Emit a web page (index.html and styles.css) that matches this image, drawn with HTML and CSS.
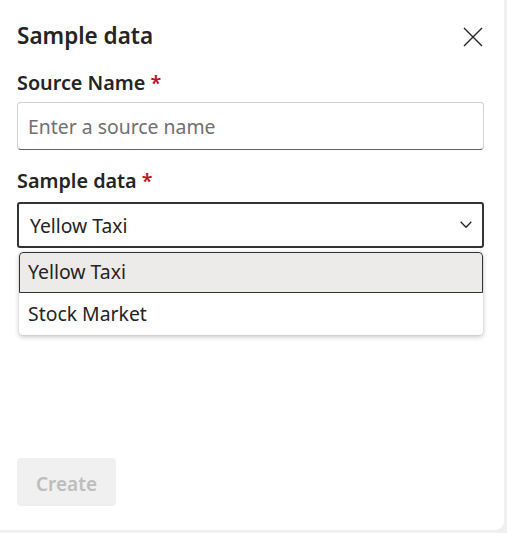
FILE: index.html
```html
<!DOCTYPE html>
<html>
<head>
<meta charset="utf-8">
<link rel="stylesheet" href="styles.css">
</head>
<body>
<div class="panel">
  <div class="header">
    <h1 class="title">Sample data</h1>
    <button class="close" aria-label="Close">
      <svg width="20" height="20" viewBox="0 0 20 20"><path d="M1 1 L19 19 M19 1 L1 19" stroke="#242424" stroke-width="1.4" fill="none"/></svg>
    </button>
  </div>
  <label class="label">Source Name <span class="req">*</span></label>
  <div class="input"><span class="placeholder">Enter a source name</span></div>
  <label class="label label2">Sample data <span class="req">*</span></label>
  <div class="select-wrap">
    <div class="select">
      <span>Yellow Taxi</span>
      <svg class="chev" width="12" height="8" viewBox="0 0 12 8"><path d="M0.7 0.8 L6 6.2 L11.3 0.8" stroke="#242424" stroke-width="1.3" fill="none"/></svg>
    </div>
    <ul class="listbox">
      <li class="opt active">Yellow Taxi</li>
      <li class="opt">Stock Market</li>
    </ul>
  </div>
  <div class="spacer"></div>
  <div class="footer">
    <button class="create" disabled>Create</button>
  </div>
</div>
</body>
</html>
```
FILE: styles.css
```css
html, body { margin: 0; padding: 0; }
body {
  background: #f0f0f0;
  width: 507px;
  height: 533px;
  font-family: "Noto Sans", "Open Sans", sans-serif;
  color: #242424;
}
.panel {
  box-sizing: border-box;
  width: 504px;
  height: 530px;
  background: #fff;
  border-bottom-right-radius: 9px;
  padding: 0 20px 0 17px;
  display: flex;
  flex-direction: column;
}
.header {
  display: flex;
  justify-content: space-between;
  align-items: center;
  height: 40px;
  margin-top: 16px;
}
.title {
  margin: 0;
  font-size: 22.5px;
  font-weight: 600;
  line-height: 28px;
}
.close {
  border: 0;
  background: none;
  padding: 0;
  width: 20px;
  height: 20px;
  margin-right: 1px;
  margin-top: 2px;
}
.close svg { display: block; }
.label {
  display: block;
  font-size: 19.8px;
  font-weight: 600;
  line-height: 24px;
  margin-top: 15px;
}
.label2 { margin-top: 19px; }
.req { color: #c50f1f; }
.input {
  box-sizing: border-box;
  height: 48px;
  margin-top: 7px;
  border: 1px solid #d1d1d1;
  border-bottom-color: #616161;
  border-radius: 4px;
  display: flex;
  align-items: center;
  padding-left: 10px;
}
.placeholder { color: #707070; font-size: 19.4px; }
.select-wrap { position: relative; margin-top: 9px; }
.select {
  box-sizing: border-box;
  height: 46px;
  border: 2px solid #333;
  border-radius: 3px;
  display: flex;
  align-items: center;
  justify-content: space-between;
  padding: 0 10px 0 11px;
  font-size: 19.3px;
}
.chev { display: block; }
.listbox {
  position: absolute;
  left: 2px;
  right: 1px;
  top: 50px;
  margin: 0;
  padding: 0;
  list-style: none;
  background: #fff;
  border-radius: 4px;
  box-shadow: 0 2px 5px rgba(0,0,0,0.22), 0 0 2px rgba(0,0,0,0.12);
  overflow: hidden;
}
.opt {
  box-sizing: border-box;
  height: 42px;
  display: flex;
  align-items: center;
  padding-left: 9px;
  padding-bottom: 2px;
  font-size: 19.4px;
}
.opt.active {
  height: 41px;
  background: #edebe9;
  border: 1px solid #333;
  border-radius: 4px 4px 0 0;
  padding-left: 8px;
}
.spacer { flex: 1; }
.footer { padding-bottom: 24px; }
.create {
  width: 99px;
  height: 48px;
  border: 0;
  border-radius: 4px;
  background: #f0f0f0;
  color: #bdbdbd;
  font-family: inherit;
  font-size: 19px;
  font-weight: 600;
  padding: 4px 0 0;
}
```
